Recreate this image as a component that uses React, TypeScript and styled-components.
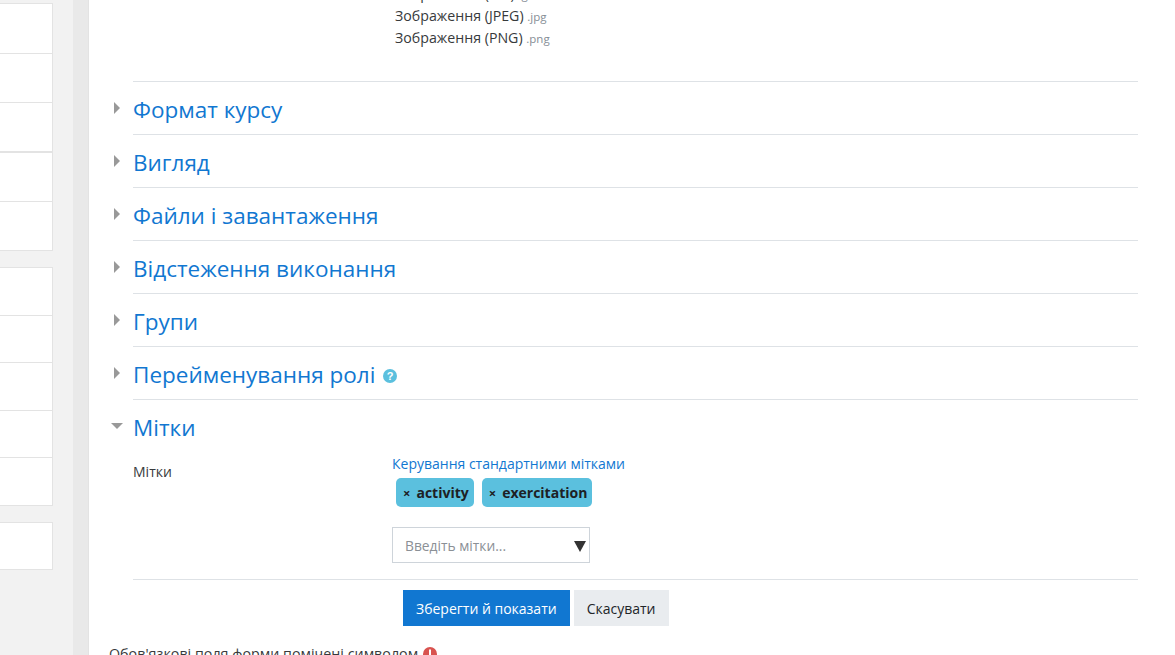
import React from "react";
import styled, { createGlobalStyle } from "styled-components";

const GlobalStyle = createGlobalStyle`
  html, body {
    margin: 0;
    padding: 0;
    background: #f2f2f2;
    overflow: hidden;
  }
  body {
    font-family: "Open Sans", "Noto Sans", "Liberation Sans", sans-serif;
    font-size: 14px;
    color: #373a3c;
  }
`;

const Page = styled.div`
  display: flex;
  height: 655px;
  overflow: hidden;
`;
const Sidebar = styled.aside`
  width: 53px;
  flex: none;
  padding-top: 3px;
  display: flex;
  flex-direction: column;
`;
const Card = styled.div<{ $gap?: number }>`
  border: solid #e3e3e3;
  border-width: 1px 1px 1px 0;
  background: #fff;
  box-sizing: border-box;
  display: flex;
  flex-direction: column;
  margin-bottom: ${(p) => p.$gap ?? 0}px;
`;
const CardRow = styled.div<{ $h: number }>`
  height: ${(p) => p.$h}px;
  box-sizing: border-box;
  & + & {
    border-top: 1px solid #e3e3e3;
  }
`;
const Strip = styled.div`
  flex: none;
  width: 15px;
  margin-left: 20px;
  background: #e9e9e9;
`;
const Main = styled.main`
  flex: 1;
  background: #fff;
  border-left: 1px solid #e3e3e3;
  padding: 0 37px 0 20px;
  min-width: 0;
`;
const FileList = styled.div`
  margin: -17px 0 0 0;
  padding: 0 0 32px 286px;
`;
const FileRow = styled.div`
  height: 22px;
  line-height: 22px;
  font-size: 14.2px;
  white-space: nowrap;
`;
const Ext = styled.small`
  font-size: 11.5px;
  color: #868e96;
`;
const Section = styled.section`
  margin-left: 24px;
`;
const SectionHead = styled.div`
  position: relative;
  box-sizing: border-box;
  height: 53px;
  padding-top: 2px;
  border-top: 1px solid #dee2e6;
  display: flex;
  align-items: center;
  gap: 8px;
`;
const SectionTitle = styled.a`
  font-size: 22.5px;
  color: #1177d1;
  white-space: nowrap;
`;
const ArrowBox = styled.svg<{ $left: number; $top: number }>`
  position: absolute;
  left: ${(p) => p.$left}px;
  top: ${(p) => p.$top}px;
`;
const HelpIcon = styled.svg`
  margin-top: 3px;
`;
const Field = styled.div`
  display: grid;
  grid-template-columns: 259px 1fr;
  padding-bottom: 16px;
  border-bottom: 1px solid #dee2e6;
`;
const FieldLabel = styled.label`
  font-size: 14px;
  padding-top: 9px;
  line-height: 22px;
`;
const FieldBody = styled.div`
  display: flex;
  flex-direction: column;
  align-items: flex-start;
`;
const ManageLink = styled.a`
  color: #1177d1;
  font-size: 14px;
  line-height: 22px;
  margin-top: 1px;
`;
const Tags = styled.div`
  display: flex;
  gap: 8px;
  margin: 3px 0 20px 4px;
`;
const Tag = styled.span`
  display: flex;
  align-items: center;
  gap: 6px;
  height: 29px;
  padding: 0 5px 0 7px;
  box-sizing: border-box;
  background: #5bc0de;
  border-radius: 5px;
  color: #1d2125;
  font-weight: 700;
  font-size: 14px;
`;
const TagClose = styled.span`
  font-weight: 700;
  font-size: 13px;
`;
const SelectBox = styled.div`
  width: 198px;
  height: 36px;
  box-sizing: border-box;
  border: 1px solid #ced4da;
  padding: 0 12px;
  display: flex;
  align-items: center;
  font-size: 13.8px;
  color: #8b9096;
  position: relative;
`;
const SelectArrow = styled.svg`
  position: absolute;
  right: 3px;
  top: 13px;
`;
const Actions = styled.div`
  display: flex;
  gap: 4px;
  padding: 10px 0 0 270px;
`;
const Button = styled.button<{ $primary?: boolean }>`
  height: 36px;
  padding: 0 13px;
  border: 0;
  font: inherit;
  font-size: 14px;
  white-space: nowrap;
  background: ${(p) => (p.$primary ? "#1177d1" : "#e9ecef")};
  color: ${(p) => (p.$primary ? "#fff" : "#212529")};
`;
const RequiredNote = styled.div`
  display: flex;
  align-items: center;
  gap: 5px;
  margin-top: 18px;
  font-size: 14.3px;
  color: #373a3c;
  white-space: nowrap;
`;

const sections = [
  "Формат курсу",
  "Вигляд",
  "Файли і завантаження",
  "Відстеження виконання",
  "Групи",
  "Перейменування ролі",
];

const Closed = () => (
  <ArrowBox $left={-19} $top={20} width="6" height="12" viewBox="0 0 6 12">
    <path d="M0 0 L6 6 L0 12 Z" fill="#999" />
  </ArrowBox>
);
const Opened = () => (
  <ArrowBox $left={-22} $top={23} width="12" height="6" viewBox="0 0 12 6">
    <path d="M0 0 H12 L6 6 Z" fill="#999" />
  </ArrowBox>
);

export default function App() {
  return (
    <>
      <GlobalStyle />
      <Page>
        <Sidebar>
          <Card>
            <CardRow $h={49} />
            <CardRow $h={49} />
            <CardRow $h={49} />
          </Card>
          <Card $gap={16}>
            <CardRow $h={48} />
            <CardRow $h={49} />
          </Card>
          <Card $gap={16}>
            <CardRow $h={47} />
            <CardRow $h={47} />
            <CardRow $h={48} />
            <CardRow $h={47} />
            <CardRow $h={48} />
          </Card>
          <Card>
            <CardRow $h={46} />
          </Card>
        </Sidebar>
        <Strip />
        <Main>
          <FileList>
            <FileRow>
              Зображення (GIF) <Ext>.gif</Ext>
            </FileRow>
            <FileRow>
              Зображення (JPEG) <Ext>.jpg</Ext>
            </FileRow>
            <FileRow>
              Зображення (PNG) <Ext>.png</Ext>
            </FileRow>
          </FileList>
          {sections.map((title) => (
            <Section key={title}>
              <SectionHead>
                <Closed />
                <SectionTitle>{title}</SectionTitle>
                {title === "Перейменування ролі" && (
                  <HelpIcon width="14" height="14" viewBox="0 0 14 14">
                    <circle cx="7" cy="7" r="7" fill="#5bc0de" />
                    <text
                      x="7"
                      y="11"
                      textAnchor="middle"
                      fontSize="11"
                      fontWeight="700"
                      fill="#fff"
                      fontFamily="Liberation Sans, sans-serif"
                    >
                      ?
                    </text>
                  </HelpIcon>
                )}
              </SectionHead>
            </Section>
          ))}
          <Section>
            <SectionHead>
              <Opened />
              <SectionTitle>Мітки</SectionTitle>
            </SectionHead>
            <Field>
              <FieldLabel>Мітки</FieldLabel>
              <FieldBody>
                <ManageLink>Керування стандартними мітками</ManageLink>
                <Tags>
                  <Tag>
                    <TagClose>×</TagClose> activity
                  </Tag>
                  <Tag>
                    <TagClose>×</TagClose> exercitation
                  </Tag>
                </Tags>
                <SelectBox>
                  Введіть мітки...
                  <SelectArrow width="12" height="12" viewBox="0 0 12 12">
                    <path d="M0 0 H12 L6 11 Z" fill="#333" />
                  </SelectArrow>
                </SelectBox>
              </FieldBody>
            </Field>
            <Actions>
              <Button $primary>Зберегти й показати</Button>
              <Button>Скасувати</Button>
            </Actions>
          </Section>
          <RequiredNote>
            Обов'язкові поля форми помічені символом
            <svg width="14" height="14" viewBox="0 0 14 14">
              <circle cx="7" cy="7" r="7" fill="#d9534f" />
              <rect x="6" y="2.5" width="2" height="6" fill="#fff" />
              <rect x="6" y="9.5" width="2" height="2" fill="#fff" />
            </svg>
          </RequiredNote>
        </Main>
      </Page>
    </>
  );
}
